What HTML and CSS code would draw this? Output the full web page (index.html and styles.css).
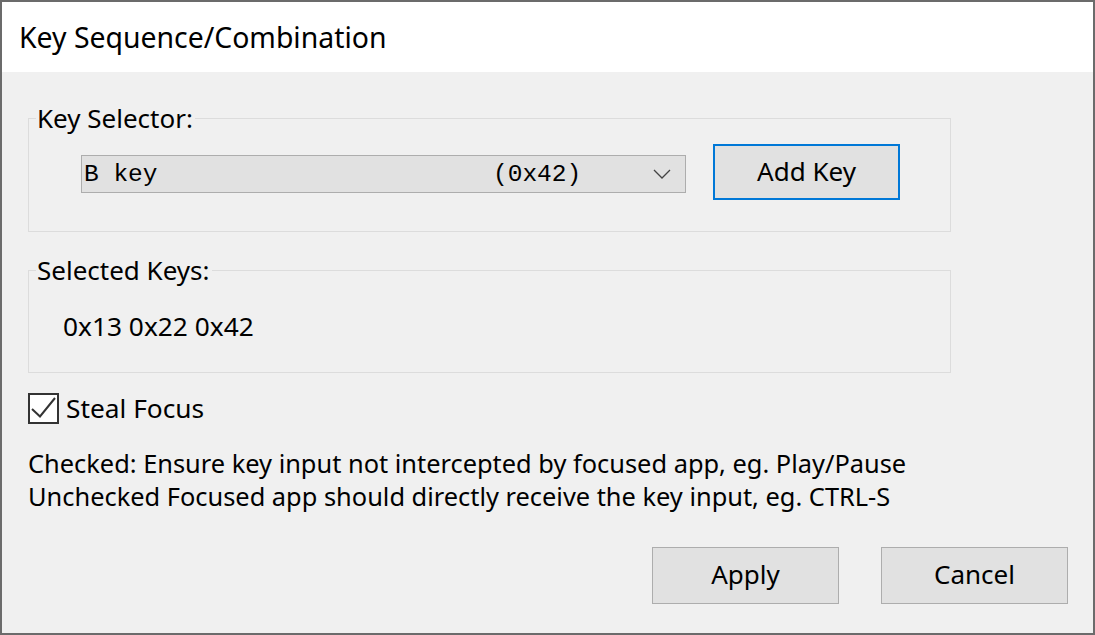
FILE: index.html
```html
<!DOCTYPE html>
<html>
<head>
<meta charset="utf-8">
<link rel="stylesheet" href="styles.css">
</head>
<body>
<div class="window">
  <div class="titlebar">Key Sequence/Combination</div>
  <div class="content">
    <fieldset class="group group-selector">
      <legend>Key Selector:</legend>
      <div class="selector-row">
        <div class="combo">
          <span class="combo-name">B key</span>
          <span class="combo-code">(0x42)</span>
          <svg class="chevron" width="18" height="10" viewBox="0 0 18 10"><path d="M1 1 L9 9 L17 1" fill="none" stroke="#444" stroke-width="1.3"/></svg>
        </div>
        <button class="btn btn-default">Add Key</button>
      </div>
    </fieldset>
    <fieldset class="group group-keys">
      <legend>Selected Keys:</legend>
      <div class="keys">0x13 0x22 0x42</div>
    </fieldset>
    <label class="check-row">
      <span class="checkbox"><svg width="27" height="27" viewBox="0 0 27 27"><path d="M2 14 L10 21.5 L25 3" fill="none" stroke="#333" stroke-width="2"/></svg></span>
      <span>Steal Focus</span>
    </label>
    <div class="help">
      <div>Checked: Ensure key input not intercepted by focused app, eg. Play/Pause</div>
      <div>Unchecked Focused app should directly receive the key input, eg. CTRL-S</div>
    </div>
    <div class="actions">
      <button class="btn">Apply</button>
      <button class="btn">Cancel</button>
    </div>
  </div>
</div>
</body>
</html>
```

FILE: styles.css
```css
html, body {
  margin: 0;
  padding: 0;
  background: #f0f0f0;
}
.window {
  width: 1095px;
  height: 635px;
  box-sizing: border-box;
  border: 2px solid #6b6b6b;
  display: flex;
  flex-direction: column;
  font-family: "Noto Sans", sans-serif;
  font-size: 26.3px;
  color: #000;
}
.titlebar {
  height: 70px;
  flex: none;
  background: #fff;
  display: flex;
  align-items: center;
  padding-left: 17px;
  font-family: "Noto Sans", sans-serif;
  font-size: 28.4px;
}
.content {
  flex: 1;
  background: #f0f0f0;
  padding: 0 25px 0 26px;
  display: flex;
  flex-direction: column;
}
.group {
  margin: 0;
  width: 923px;
  box-sizing: border-box;
  border: 1px solid #dcdcdc;
  padding: 0;
}
.group legend {
  margin-left: 7px;
  padding: 0 2px 0 1px;
  line-height: 26px;
  font-size: 26px;
}
.group-selector {
  margin-top: 33px;
  height: 127px;
}
.selector-row {
  display: flex;
  align-items: flex-start;
  padding: 13px 0 0 52px;
}
.combo {
  margin-top: 11px;
  width: 605px;
  height: 38px;
  box-sizing: border-box;
  border: 1px solid #adadad;
  background: #e1e1e1;
  display: flex;
  align-items: center;
  padding: 0 14px 0 2px;
  font-family: "Liberation Mono", monospace;
  font-size: 24.5px;
}
.combo-name {
  width: 409px;
  flex: none;
}
.combo-code {
  flex: 1;
}
.chevron {
  display: block;
}
.btn {
  width: 187px;
  height: 57px;
  box-sizing: border-box;
  border: 1px solid #adadad;
  background: #e1e1e1;
  font-family: "Noto Sans", sans-serif;
  font-size: 26px;
  color: #000;
  padding: 0 0 3px 0;
  margin: 0;
}
.btn-default {
  margin-left: 27px;
  height: 56px;
  border: 2px solid #0078d7;
  padding-bottom: 2px;
}
.group-keys {
  margin-top: 25px;
  height: 116px;
}
.keys {
  margin-top: 30px;
  padding-left: 34px;
  line-height: 26px;
}
.check-row {
  margin-top: 19px;
  display: flex;
  align-items: center;
  gap: 7px;
  height: 32px;
}
.checkbox {
  width: 31px;
  height: 31px;
  box-sizing: border-box;
  border: 2px solid #333;
  background: #fff;
  display: flex;
  align-items: center;
  justify-content: center;
}
.checkbox svg {
  display: block;
}
.help {
  margin-top: 23px;
  line-height: 33px;
  font-size: 25.4px;
}
.actions {
  margin-top: auto;
  margin-bottom: 29px;
  display: flex;
  justify-content: flex-end;
  gap: 42px;
}
```
